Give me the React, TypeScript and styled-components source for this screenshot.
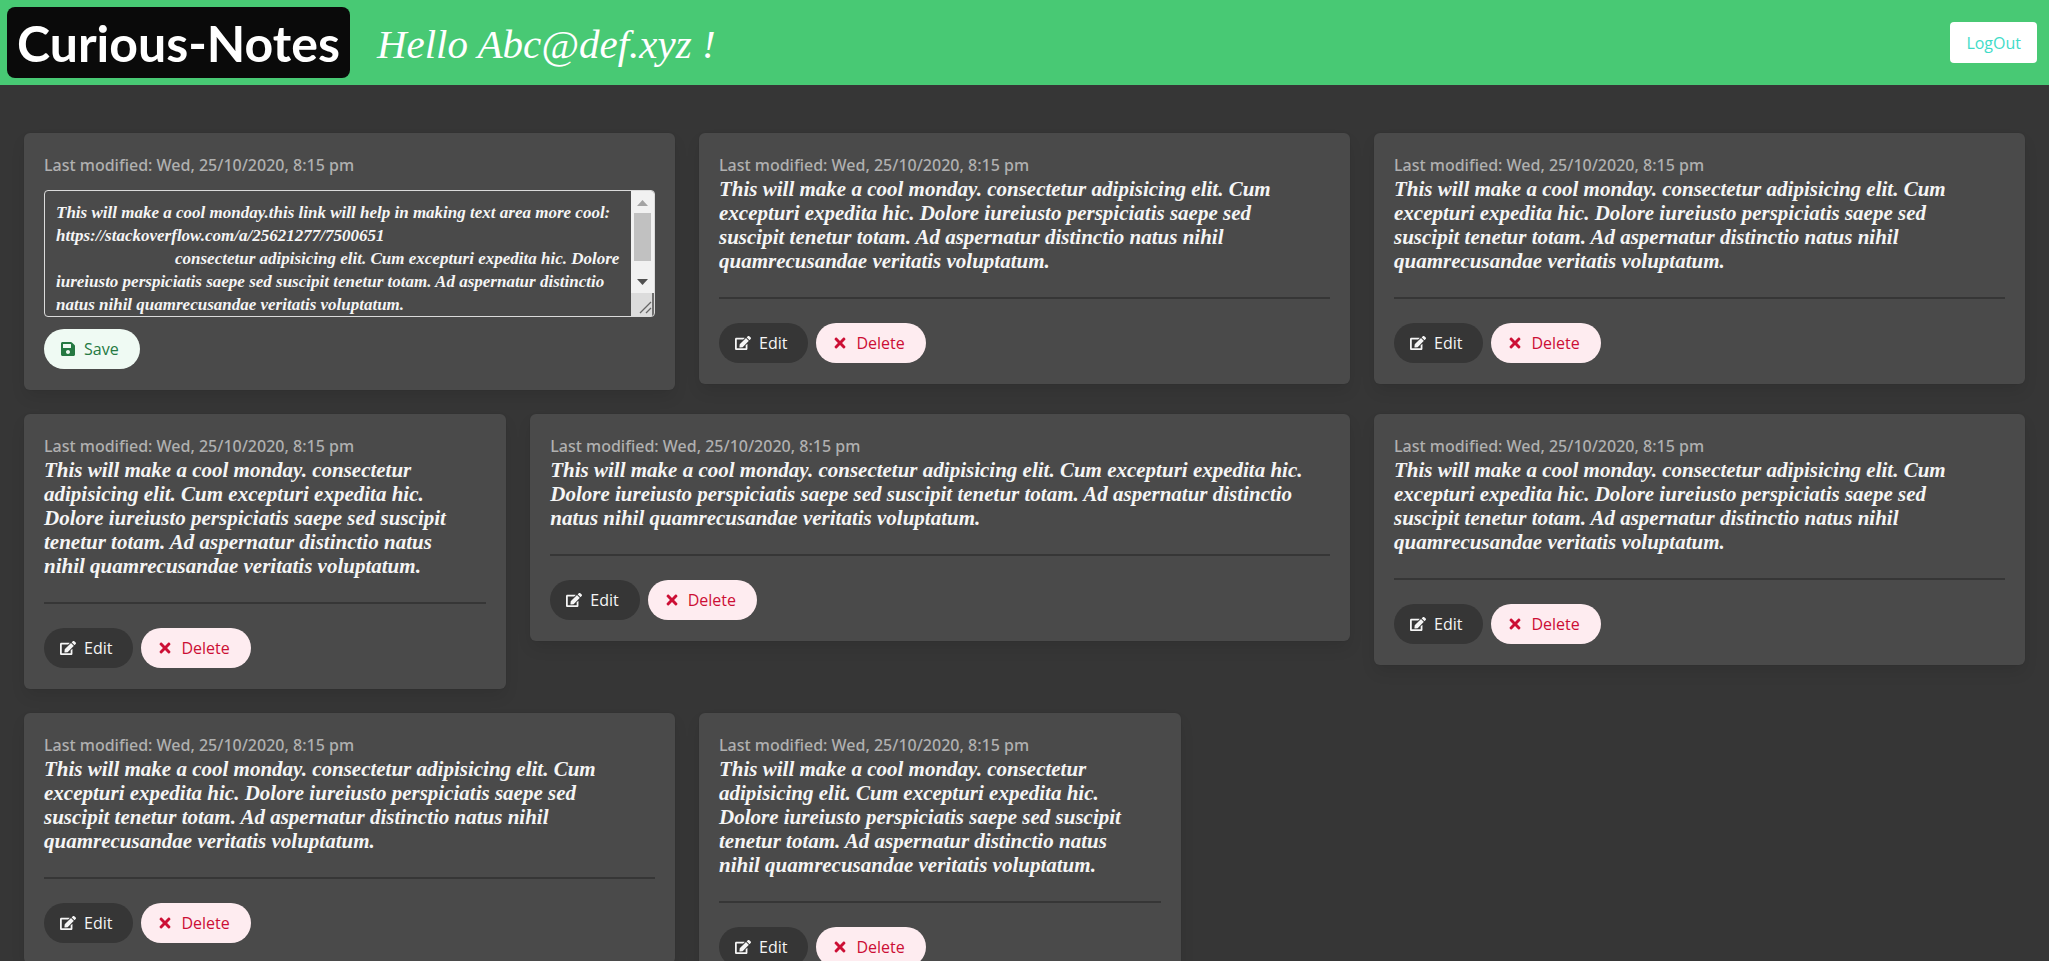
import React, { useState } from "react";
import styled, { createGlobalStyle, css } from "styled-components";
import { FaEdit, FaSave, FaTimes } from "react-icons/fa";

const GlobalStyle = createGlobalStyle`
  * { box-sizing: border-box; }
  body {
    margin: 0;
    background: #363636;
    color: whitesmoke;
    font-family: "Open Sans", sans-serif;
    font-size: 16px;
  }
`;

const script = css`
  font-family: "Liberation Serif", serif;
  font-style: italic;
`;

const Header = styled.header`
  display: flex;
  align-items: center;
  gap: 27px;
  padding: 7px 12px 7px 7px;
  background: #48c974;
`;

const Brand = styled.h1`
  margin: 0;
  padding: 2px 10px 0;
  border-radius: 8px;
  background: #0a0a0a;
  color: #fff;
  font-family: Lato, sans-serif;
  font-size: 50px;
  font-weight: 700;
  line-height: 69px;
`;

const Greeting = styled.p`
  ${script}
  flex: 1;
  margin: 0;
  padding-top: 4px;
  color: #fff;
  font-size: 41px;
  line-height: 67px;
`;

const LogOutButton = styled.button`
  height: 41px;
  padding: 0 16px;
  border: 0;
  border-radius: 4px;
  background: #fff;
  color: #3fdcc8;
  font: inherit;
  cursor: pointer;
`;

const Board = styled.main`
  display: grid;
  grid-template-columns: repeat(12, minmax(0, 1fr));
  align-items: start;
  gap: 24px;
  padding: 48px 24px;
`;

const Card = styled.article<{ $span: number }>`
  grid-column: span ${(p) => p.$span};
  padding: 20px;
  border-radius: 6px;
  background: #4a4a4a;
  box-shadow: 0 8px 16px -2px rgba(10, 10, 10, 0.1), 0 0 0 1px rgba(10, 10, 10, 0.02);
`;

const Modified = styled.p`
  margin: 0;
  color: #b0b0b0;
  font-family: "Noto Sans", sans-serif;
  font-weight: 500;
  line-height: 24px;
`;

const NoteText = styled.p`
  ${script}
  margin: 0;
  padding-right: 12px;
  font-size: 21px;
  font-weight: 700;
  line-height: 24px;
`;

const Divider = styled.hr`
  height: 2px;
  margin: 24px 0;
  border: 0;
  background: #363636;
`;

const Actions = styled.div`
  display: flex;
  gap: 8px;
`;

const tones = {
  dark: css`background: #363636; color: whitesmoke;`,
  danger: css`background: #feecf0; color: #cc0f35;`,
  success: css`background: #effaf3; color: #257942;`,
};

const PillButton = styled.button<{ $tone: keyof typeof tones }>`
  display: inline-flex;
  align-items: center;
  gap: 4px;
  height: 40px;
  padding: 0 21px 0 12px;
  border: 0;
  border-radius: 20px;
  margin-bottom: 1px;
  font: inherit;
  cursor: pointer;
  ${(p) => tones[p.$tone]}
`;

const IconBox = styled.span`
  display: inline-flex;
  justify-content: center;
  width: 24px;
`;

const EditorFrame = styled.div`
  display: flex;
  height: 127px;
  margin: 13px 0 12px;
  overflow: hidden;
  border: 1px solid #dbdbdb;
  border-radius: 4px;
`;

const Editor = styled.textarea`
  ${script}
  flex: 1;
  min-width: 0;
  padding: 10px 8px 10px 11px;
  overflow-y: auto;
  scrollbar-width: none;
  border: 0;
  outline: none;
  background: transparent;
  color: whitesmoke;
  font-size: 17px;
  font-weight: 700;
  line-height: 23px;
  resize: none;
`;

const ScrollRail = styled.div`
  display: flex;
  flex-direction: column;
  width: 23px;
  background: #f1f1f1;
`;

const RailArrow = styled.svg`
  width: 23px;
  height: 22px;
`;

const RailTrack = styled.div`
  flex: 1;
  padding: 0 3px;
`;

const RailThumb = styled.div`
  height: 48px;
  background: #c1c1c1;
`;

const ResizeGrip = styled.svg`
  width: 23px;
  height: 23px;
  background: #dcdcdc;
`;

const BODY =
  "This will make a cool monday. consectetur adipisicing elit. Cum excepturi expedita hic. Dolore iureiusto perspiciatis saepe sed suscipit tenetur totam. Ad aspernatur distinctio natus nihil quamrecusandae veritatis voluptatum.";

const DRAFT =
  "This will make a cool monday.this link will help in making text area more cool: https://stackoverflow.com/a/25621277/7500651\n" +
  " ".repeat(28) +
  "consectetur adipisicing elit. Cum excepturi expedita hic. Dolore iureiusto perspiciatis saepe sed suscipit tenetur totam. Ad aspernatur distinctio natus nihil quamrecusandae veritatis voluptatum.\n\n\n";

const MODIFIED = "Last modified: Wed, 25/10/2020, 8:15 pm";

const notes = [4, 4, 3, 5, 4, 4, 3].map((span, id) => ({ id, span, body: BODY }));

function EditingCard() {
  const [text, setText] = useState(DRAFT);
  return (
    <Card $span={4}>
      <Modified>{MODIFIED}</Modified>
      <EditorFrame>
        <Editor
          aria-label="Note text"
          spellCheck={false}
          value={text}
          onChange={(e) => setText(e.target.value)}
        />
        <ScrollRail aria-hidden="true">
          <RailArrow viewBox="0 0 23 22">
            <path d="M6 15h11l-5.500-6z" fill="#a3a3a3" />
          </RailArrow>
          <RailTrack>
            <RailThumb />
          </RailTrack>
          <RailArrow viewBox="0 0 23 22">
            <path d="M6 8h11l-5.500 6z" fill="#505050" />
          </RailArrow>
          <ResizeGrip viewBox="0 0 23 23">
            <path d="M9 20L20 9M15 20l5-5" stroke="#666" strokeWidth="1.300" fill="none" />
            <path d="M22 0v23" stroke="#4a4a4a" strokeWidth="1.500" />
          </ResizeGrip>
        </ScrollRail>
      </EditorFrame>
      <Actions>
        <PillButton type="button" $tone="success">
          <IconBox><FaSave size={16} /></IconBox>
          Save
        </PillButton>
      </Actions>
    </Card>
  );
}

function NoteCard({ span, body }: { span: number; body: string }) {
  return (
    <Card $span={span}>
      <Modified>{MODIFIED}</Modified>
      <NoteText>{body}</NoteText>
      <Divider />
      <Actions>
        <PillButton type="button" $tone="dark">
          <IconBox><FaEdit size={16} /></IconBox>
          Edit
        </PillButton>
        <PillButton type="button" $tone="danger">
          <IconBox><FaTimes size={16} /></IconBox>
          Delete
        </PillButton>
      </Actions>
    </Card>
  );
}

export default function App() {
  return (
    <>
      <GlobalStyle />
      <Header>
        <Brand>Curious-Notes</Brand>
        <Greeting>Hello Abc@def.xyz !</Greeting>
        <LogOutButton type="button">LogOut</LogOutButton>
      </Header>
      <Board>
        <EditingCard />
        {notes.map((note) => (
          <NoteCard key={note.id} span={note.span} body={note.body} />
        ))}
      </Board>
    </>
  );
}
